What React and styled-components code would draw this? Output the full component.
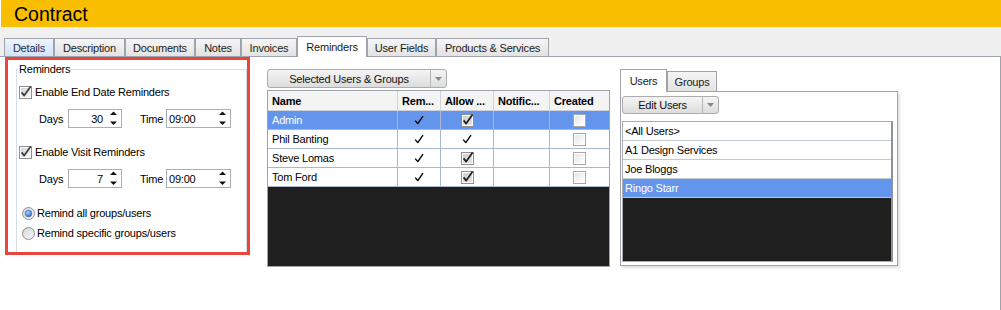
import React from 'react';
import styled, { createGlobalStyle } from 'styled-components';

const GlobalStyle = createGlobalStyle`
  html, body {
    margin: 0;
    padding: 0;
    background: #fff;
  }
  body {
    font-family: 'Liberation Sans', Arial, sans-serif;
    font-size: 11px;
    letter-spacing: -0.2px;
    color: #000;
  }
  * {
    box-sizing: border-box;
  }
`;

const mainTabs = [
   { label: 'Details', w: 50, hover: true },
   { label: 'Description', w: 71 },
   { label: 'Documents', w: 70 },
   { label: 'Notes', w: 46 },
   { label: 'Invoices', w: 56 },
   { label: 'Reminders', w: 70, active: true },
   { label: 'User Fields', w: 69 },
   { label: 'Products & Services', w: 113 },
];

const columns = [
   { label: 'Name', w: 130 },
   { label: 'Rem...', w: 43 },
   { label: 'Allow ...', w: 53 },
   { label: 'Notific...', w: 56 },
   { label: 'Created', w: 59 },
];

const people = [
   { name: 'Admin', allow: 'box', selected: true },
   { name: 'Phil Banting', allow: 'tick' },
   { name: 'Steve Lomas', allow: 'box' },
   { name: 'Tom Ford', allow: 'box' },
];

const users = ['<All Users>', 'A1 Design Services', 'Joe Bloggs', 'Ringo Starr'];

// маленькая галочка как в гриде
const Tick = () => (
   <svg width="10" height="10" viewBox="0 0 10 10">
      <path
         d="M1.2 5.6 L3.8 8.6 L9 1.2"
         fill="none"
         stroke="#000"
         strokeWidth="1.4"
         strokeLinejoin="round"
      />
   </svg>
);

const CheckBox = ({ checked, tone = 'win' }) => {
   const fills = {
      win: ['#d2d5da', '#f7f7f7'],
      grid: ['#cfcfcf', '#e4e4e4'],
      empty: ['#e6e6e6', '#ffffff'],
   }[tone];
   const id = 'cb-' + tone;
   return (
      <svg width="13" height="13" viewBox="0 0 13 13" style={{ overflow: 'visible', flex: 'none' }}>
         <defs>
            <linearGradient id={id} x1="0" y1="0" x2="1" y2="1">
               <stop offset="0" stopColor={fills[0]} />
               <stop offset="1" stopColor={fills[1]} />
            </linearGradient>
         </defs>
         <rect x="0.5" y="0.5" width="12" height="12" fill="#fff" stroke={tone === 'empty' ? '#a7a7a7' : '#8e8f8f'} />
         <rect x="2" y="2" width="9" height="9" fill={`url(#${id})`} />
         {checked && (
            <path
               d="M2.6 6.4 L5.2 9.6 L11.6 0.6"
               fill="none"
               stroke={tone === 'win' ? '#3c3c3c' : '#202020'}
               strokeWidth="1.7"
               strokeLinejoin="round"
            />
         )}
      </svg>
   );
};

const Radio = ({ checked }) => (
   <svg width="13" height="13" viewBox="0 0 13 13" style={{ flex: 'none' }}>
      <defs>
         <linearGradient id="rb-bg" x1="0" y1="0" x2="1" y2="1">
            <stop offset="0" stopColor="#d0d3d8" />
            <stop offset="1" stopColor="#fafafa" />
         </linearGradient>
         <radialGradient id="rb-dot" cx="0.4" cy="0.35" r="0.7">
            <stop offset="0" stopColor="#a9d0f7" />
            <stop offset="1" stopColor="#2a62b8" />
         </radialGradient>
      </defs>
      <circle cx="6.5" cy="6.5" r="6" fill="url(#rb-bg)" stroke="#8e8f8f" />
      {checked && <circle cx="6.5" cy="6.5" r="3.4" fill="url(#rb-dot)" stroke="#4a7bc4" strokeWidth="0.6" />}
   </svg>
);

const SpinArrows = () => (
   <svg width="17" height="17" viewBox="0 0 17 17">
      <polygon points="6,5 13,5 9.5,1.5" fill="#111" />
      <polygon points="6,11.5 13,11.5 9.5,15" fill="#111" />
   </svg>
);

const DropArrow = () => (
   <svg width="7" height="4" viewBox="0 0 7 4">
      <polygon points="0,0 7,0 3.5,4" fill="#8a8a8a" />
   </svg>
);

const App = () => {
   return (
      <Page>
         <GlobalStyle />
         <Header>Contract</Header>
         <TabStrip>
            {mainTabs.map((t) => (
               <Tab key={t.label} $w={t.w} $active={t.active} $hover={t.hover}>
                  {t.label}
               </Tab>
            ))}
         </TabStrip>
         <TabPage>
            <Highlight>
               <GroupBox>
                  <Legend>Reminders</Legend>
                  <CheckRow $top={8}>
                     <CheckBox checked />
                     <span>Enable End Date Reminders</span>
                  </CheckRow>
                  <FieldRow $top={9}>
                     <FieldLabel $w={29}>Days</FieldLabel>
                     <SpinBox $w={54}>
                        <SpinValue $align="right">30</SpinValue>
                        <SpinArrows />
                     </SpinBox>
                     <FieldLabel $w={26} $gap={18}>Time</FieldLabel>
                     <SpinBox $w={65}>
                        <SpinValue $align="left">09:00</SpinValue>
                        <SpinArrows />
                     </SpinBox>
                  </FieldRow>
                  <CheckRow $top={16}>
                     <CheckBox checked />
                     <span>Enable Visit Reminders</span>
                  </CheckRow>
                  <FieldRow $top={9}>
                     <FieldLabel $w={29}>Days</FieldLabel>
                     <SpinBox $w={54}>
                        <SpinValue $align="right">7</SpinValue>
                        <SpinArrows />
                     </SpinBox>
                     <FieldLabel $w={26} $gap={18}>Time</FieldLabel>
                     <SpinBox $w={65}>
                        <SpinValue $align="left">09:00</SpinValue>
                        <SpinArrows />
                     </SpinBox>
                  </FieldRow>
                  <RadioRow $top={17}>
                     <Radio checked />
                     <span>Remind all groups/users</span>
                  </RadioRow>
                  <RadioRow $top={4}>
                     <Radio />
                     <span>Remind specific groups/users</span>
                  </RadioRow>
               </GroupBox>
            </Highlight>

            <MiddleColumn>
               <SplitButton $w={180}>
                  <SplitMain>Selected Users &amp; Groups</SplitMain>
                  <SplitDrop>
                     <DropArrow />
                  </SplitDrop>
               </SplitButton>
               <Grid>
                  <GridRow $head>
                     {columns.map((c) => (
                        <Cell key={c.label} $w={c.w} $head>
                           {c.label}
                        </Cell>
                     ))}
                  </GridRow>
                  {people.map((p) => (
                     <GridRow key={p.name} $selected={p.selected}>
                        <Cell $w={130}>{p.name}</Cell>
                        <Cell $w={43} $center>
                           <Tick />
                        </Cell>
                        <Cell $w={53} $center>
                           {p.allow === 'box' ? <CheckBox checked tone="grid" /> : <Tick />}
                        </Cell>
                        <Cell $w={56} />
                        <Cell $w={59} $center>
                           <CheckBox tone="empty" />
                        </Cell>
                     </GridRow>
                  ))}
                  <DarkFill />
               </Grid>
            </MiddleColumn>

            <RightColumn>
               <SubTabs>
                  <SubTab $active $w={47}>Users</SubTab>
                  <SubTab $w={50}>Groups</SubTab>
               </SubTabs>
               <Panel>
                  <SplitButton $w={97} $h={18}>
                     <SplitMain>Edit Users</SplitMain>
                     <SplitDrop>
                        <DropArrow />
                     </SplitDrop>
                  </SplitButton>
                  <List>
                     {users.map((u) => (
                        <ListItem key={u} $selected={u === 'Ringo Starr'}>
                           {u}
                        </ListItem>
                     ))}
                     <DarkFill />
                  </List>
               </Panel>
            </RightColumn>
         </TabPage>
      </Page>
   );
};

const Page = styled.div`
   width: 1001px;
   height: 310px;
   display: flex;
   flex-direction: column;
   background: #fff;
   overflow: hidden;
`;

const Header = styled.div`
   flex: none;
   height: 27px;
   margin-left: 1px;
   padding-left: 13px;
   background: #f9be00;
   font-size: 19.5px;
   letter-spacing: 0;
   line-height: 28px;
   color: #000;
`;

const TabStrip = styled.div`
   flex: none;
   height: 30px;
   display: flex;
   align-items: flex-end;
   padding-left: 4px;
   background: #f0f0f0;
   border-bottom: 1px solid #a0a3ab;
`;

const Tab = styled.div`
   position: relative;
   z-index: ${(p) => (p.$active ? 1 : 0)};
   width: ${(p) => p.$w}px;
   height: ${(p) => (p.$active ? 21 : 18)}px;
   margin-bottom: ${(p) => (p.$active ? -1 : 0)}px;
   display: flex;
   align-items: center;
   justify-content: center;
   border: 1px solid #a0a3ab;
   border-bottom: none;
   background: ${(p) =>
      p.$active
         ? '#fff'
         : p.$hover
         ? 'linear-gradient(#edf4fd, #d3e3f8)'
         : 'linear-gradient(#f5f5f5, #e3e3e3)'};
   color: ${(p) => (p.$hover ? '#1c2f4f' : '#1a1a1a')};
   white-space: nowrap;
`;

const TabPage = styled.div`
   flex: 1;
   display: flex;
   align-items: flex-start;
   padding-left: 5px;
   border-right: 1px solid #a0a3ab;
`;

const Highlight = styled.div`
   flex: none;
   width: 245px;
   height: 198px;
   display: flex;
   flex-direction: column;
   padding: 9px 0 0 8px;
   border: 3px solid #e8463d;
   overflow: hidden;
`;

const GroupBox = styled.div`
   flex: 1;
   display: flex;
   flex-direction: column;
   padding-left: 1px;
   border: 1px solid #d5dfe5;
   border-bottom: none;
`;

const Legend = styled.span`
   align-self: flex-start;
   margin-top: -7px;
   padding: 0 1px;
   background: #fff;
   line-height: 13px;
`;

const CheckRow = styled.div`
   display: flex;
   align-items: center;
   gap: 3px;
   height: 16px;
   margin-top: ${(p) => p.$top}px;
   margin-left: 1px;
   white-space: nowrap;
`;

const RadioRow = styled(CheckRow)`
   gap: 2px;
   margin-left: 4px;
`;

const FieldRow = styled.div`
   display: flex;
   align-items: center;
   height: 19px;
   margin-top: ${(p) => p.$top}px;
   margin-left: 21px;
`;

const FieldLabel = styled.span`
   width: ${(p) => p.$w}px;
   margin-left: ${(p) => p.$gap || 0}px;
   flex: none;
`;

const SpinBox = styled.div`
   width: ${(p) => p.$w}px;
   height: 19px;
   flex: none;
   display: flex;
   align-items: center;
   border: 1px solid #abadb3;
   background: #fff;
`;

const SpinValue = styled.span`
   flex: 1;
   text-align: ${(p) => p.$align};
   padding: 0 1px 0 2px;
`;

const MiddleColumn = styled.div`
   flex: none;
   display: flex;
   flex-direction: column;
   gap: 2px;
   margin: 12px 0 0 17px;
`;

const SplitButton = styled.div`
   width: ${(p) => p.$w}px;
   height: ${(p) => p.$h || 19}px;
   flex: none;
   display: flex;
   border: 1px solid #acacac;
   border-radius: 3px;
   background: linear-gradient(#f4f4f4, #e9e9e9 50%, #dcdcdc);
   color: #111;
`;

const SplitMain = styled.div`
   flex: 1;
   display: flex;
   align-items: center;
   justify-content: center;
   border-right: 1px solid #b6b6b6;
   white-space: nowrap;
`;

const SplitDrop = styled.div`
   width: 15px;
   flex: none;
   display: flex;
   align-items: center;
   justify-content: center;
`;

const Grid = styled.div`
   width: 343px;
   height: 177px;
   display: flex;
   flex-direction: column;
   border: 1px solid #9ea4ad;
`;

const GridRow = styled.div`
   flex: none;
   display: flex;
   height: ${(p) => (p.$head ? 20 : 19)}px;
   border-bottom: 1px solid ${(p) => (p.$head ? '#d0d4da' : '#a9b8cf')};
   background: ${(p) => (p.$selected ? '#6495ed' : p.$head ? '#f4f4f4' : '#fff')};
   color: ${(p) => (p.$selected ? '#fff' : '#000')};
   font-weight: ${(p) => (p.$head ? 'bold' : 'normal')};
`;

const Cell = styled.div`
   width: ${(p) => p.$w}px;
   flex: none;
   display: flex;
   align-items: center;
   justify-content: ${(p) => (p.$center ? 'center' : 'flex-start')};
   padding-left: ${(p) => (p.$center ? 0 : 4)}px;
   border-right: 1px solid ${(p) => (p.$head ? '#d0d4da' : '#a9b8cf')};
   white-space: nowrap;
   overflow: hidden;
   &:last-child {
      border-right: none;
   }
`;

const DarkFill = styled.div`
   flex: 1;
   background: #1f1f1f;
`;

const RightColumn = styled.div`
   flex: none;
   display: flex;
   flex-direction: column;
   margin: 12px 0 0 10px;
`;

const SubTabs = styled.div`
   display: flex;
   align-items: flex-end;
   height: 22px;
`;

const SubTab = styled.div`
   position: relative;
   z-index: ${(p) => (p.$active ? 1 : 0)};
   width: ${(p) => p.$w}px;
   height: ${(p) => (p.$active ? 23 : 20)}px;
   margin-bottom: ${(p) => (p.$active ? -1 : 0)}px;
   display: flex;
   align-items: center;
   justify-content: center;
   border: 1px solid #a0a3ab;
   border-bottom: none;
   background: ${(p) => (p.$active ? '#fff' : 'linear-gradient(#f5f5f5, #e3e3e3)')};
   color: #1a1a1a;
`;

const Panel = styled.div`
   width: 278px;
   height: 175px;
   display: flex;
   flex-direction: column;
   gap: 7px;
   padding: 4px 0 3px 1px;
   border: 1px solid #a0a3ab;
   background: #fff;
   box-shadow: 2px 2px 2px rgba(0, 0, 0, 0.12);
`;

const List = styled.div`
   flex: 1;
   width: 271px;
   display: flex;
   flex-direction: column;
   border: 1px solid #a9acb3;
   border-right: 2px solid #8f9299;
`;

const ListItem = styled.div`
   flex: none;
   height: 19px;
   display: flex;
   align-items: center;
   padding-left: 2px;
   border-bottom: 1px solid #c3c9d2;
   background: ${(p) => (p.$selected ? '#6495ed' : '#fff')};
   color: ${(p) => (p.$selected ? '#fff' : '#000')};
`;

export default App;
